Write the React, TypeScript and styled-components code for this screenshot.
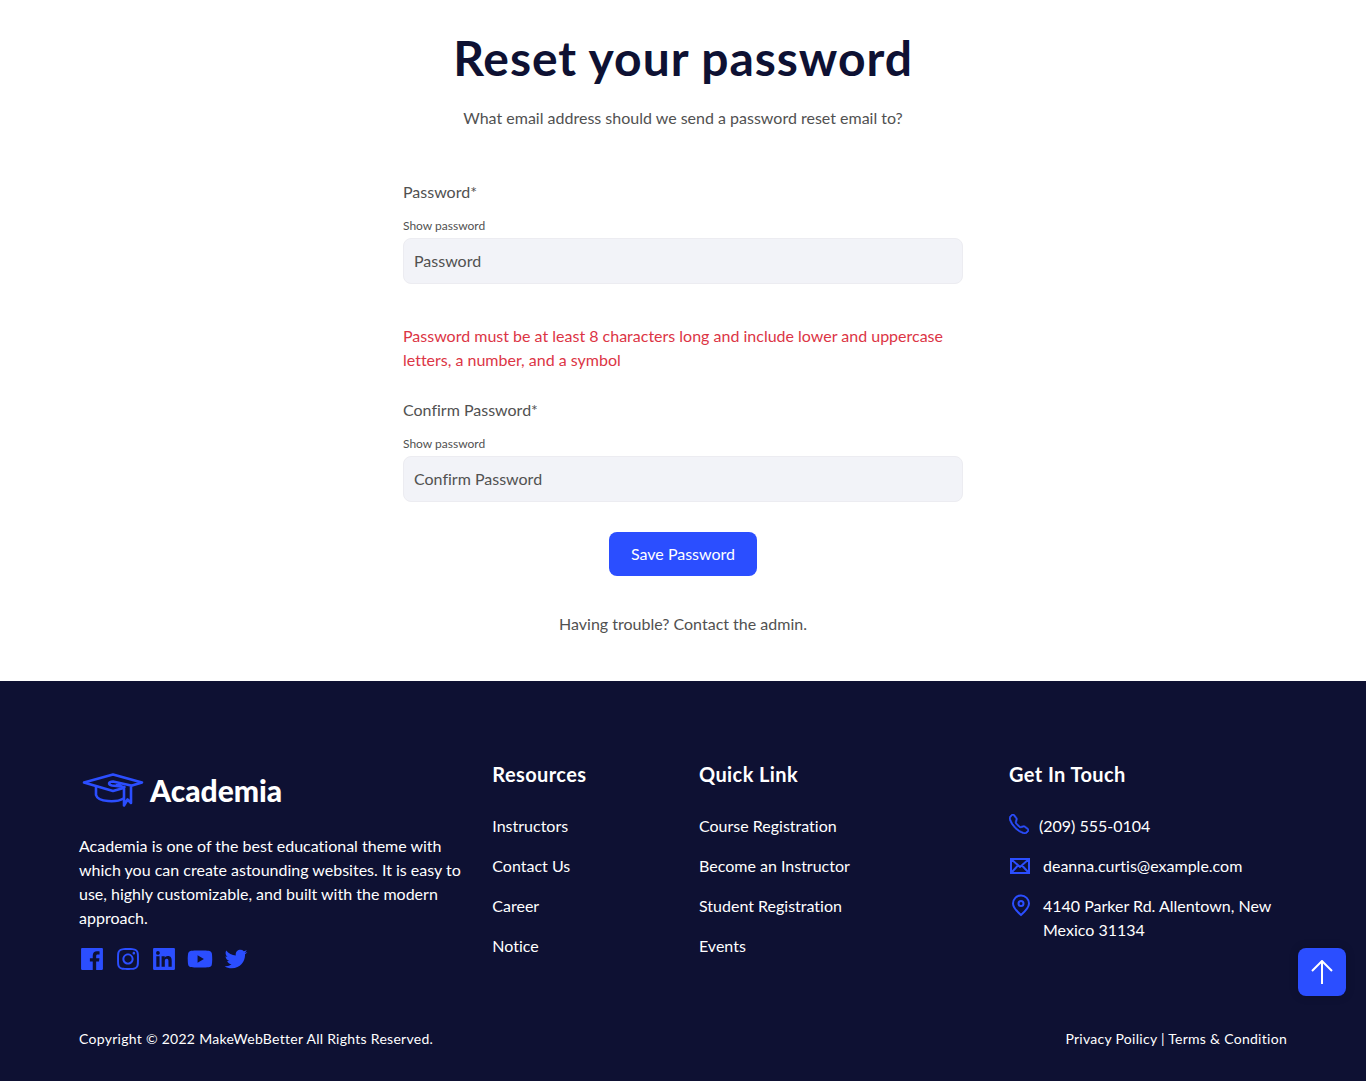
import React, { useState } from "react";
import styled, { createGlobalStyle } from "styled-components";
import {
  AiFillFacebook,
  AiOutlineInstagram,
  AiFillLinkedin,
  AiFillYoutube,
  AiOutlineTwitter,
} from "react-icons/ai";
import { BsTelephone } from "react-icons/bs";

const navy = "#0e1133";
const blue = "#2b4eff";
const grey = "#515151";
const tracking = "0.02em";

const GlobalStyle = createGlobalStyle`
  *, *::before, *::after { box-sizing: border-box; }
  body {
    margin: 0;
    background: #fff;
    color: ${grey};
    font-family: Lato, sans-serif;
    font-size: 16px;
    line-height: 24px;
    font-variant-ligatures: no-common-ligatures;
  }
  h1, h2, p, ul { margin: 0; padding: 0; }
  ul { list-style: none; }
  svg { display: block; flex: none; }
`;

const Main = styled.main`
  display: flex;
  flex-direction: column;
  align-items: center;
  padding: 28px 16px 45px;
  text-align: center;
`;

const Title = styled.h1`
  color: ${navy};
  font-size: 48px;
  line-height: 60px;
  font-weight: 700;
  letter-spacing: ${tracking};
`;

const Intro = styled.p`
  margin-top: 18px;
`;

const Form = styled.form`
  width: 100%;
  max-width: 560px;
  margin: 50px 0 36px;
  text-align: left;
`;

const Field = styled.div`
  display: flex;
  flex-direction: column;
  align-items: flex-start;
`;

const Toggle = styled.button`
  margin: 12px 0 2px;
  padding: 0;
  border: 0;
  background: none;
  color: inherit;
  font: inherit;
  font-size: 12px;
  line-height: 20px;
  cursor: pointer;
`;

const Input = styled.input`
  width: 100%;
  height: 46px;
  padding: 8px 10px 10px;
  border: 1px solid #ececf1;
  border-radius: 8px;
  background: #f2f3f8;
  color: ${grey};
  font: inherit;
  &::placeholder { color: ${grey}; opacity: 1; }
`;

const ErrorText = styled.p`
  margin: 40px 0 26px;
  color: #dc3545;
`;

const Submit = styled.button`
  display: block;
  margin: 30px auto 0;
  padding: 10px 22px;
  border: 0;
  border-radius: 8px;
  background: ${blue};
  color: #fff;
  font: inherit;
  cursor: pointer;
`;

const Footer = styled.footer`
  padding: 81px 0 30px;
  background: ${navy};
  color: #fff;
`;

const Container = styled.div`
  max-width: 1240px;
  margin: 0 auto;
`;

const Columns = styled.div`
  display: grid;
  grid-template-columns: 4fr 2fr 3fr 3fr;
  @media (max-width: 900px) { grid-template-columns: 1fr 1fr; row-gap: 32px; }
`;

const Column = styled.section`
  padding: 0 16px;
`;

const AboutColumn = styled(Column)`
  padding-right: 8px;
`;

const Brand = styled.a`
  display: flex;
  align-items: center;
  gap: 4px;
  height: 40px;
  margin: 8px 0 24px;
  color: #fff;
  font-size: 30px;
  font-weight: 900;
  text-decoration: none;
`;

const Social = styled.div`
  display: flex;
  gap: 8px;
  margin: 15px 0 0 -1px;
  a { color: ${blue}; }
`;

const Heading = styled.h2`
  margin-bottom: 28px;
  font-size: 20px;
  line-height: 24px;
  font-weight: 700;
  letter-spacing: ${tracking};
`;

const List = styled.ul`
  display: grid;
  gap: 16px;
`;

const FooterLink = styled.a`
  color: #fff;
  text-decoration: none;
`;

const Contact = styled.li<{ $gap: number }>`
  display: flex;
  align-items: flex-start;
  gap: ${({ $gap }) => $gap}px;
  svg { color: ${blue}; }
`;

const Legal = styled.div`
  display: flex;
  flex-wrap: wrap;
  justify-content: space-between;
  margin-top: 54px;
  padding: 0 16px;
  font-size: 14px;
  letter-spacing: ${tracking};
`;

const ToTop = styled.a`
  position: fixed;
  right: 20px;
  bottom: 85px;
  display: grid;
  place-items: center;
  width: 48px;
  height: 48px;
  border-radius: 8px;
  background: ${blue};
  color: #fff;
  box-shadow: 0 0 10px rgba(0, 0, 0, 0.2);
`;

const CapIcon = () => (
  <svg width="67" height="40" viewBox="0 0 67 40" fill="none" stroke={blue} strokeWidth="2.6" strokeLinejoin="round" strokeLinecap="round" aria-hidden="true">
    <path d="M34 21 5 12.500 34 4.500 63 12.500 53 15.500M34 21 44.500 18" />
    <path d="M17 16.500V25C19 32.500 38 32.500 44.500 28.500" />
    <path d="M45.500 17 33 15.500C28.500 14.500 29.500 11.500 34 11.500L52 15.500V33L48.500 29.500 45 35.500V17.500L38 14.500" />
  </svg>
);

const MailIcon = () => (
  <svg width="22" height="24" viewBox="0 0 22 24" fill="none" stroke="currentColor" strokeWidth="2" aria-hidden="true">
    <path d="M2 5H20V19H2ZM2 5 11 13 20 5M2 19 9 11.500M20 19 13 11.500" />
  </svg>
);

const PinIcon = () => (
  <svg width="22" height="24" viewBox="0 0 22 24" fill="none" stroke="currentColor" strokeWidth="2" aria-hidden="true">
    <path d="M12 21C8 17.500 4 14 4 9.500A8 8 0 0 1 20 9.500C20 14 16 17.500 12 21Z" />
    <circle cx="12" cy="9.500" r="2.500" />
  </svg>
);

const ArrowIcon = () => (
  <svg width="24" height="24" viewBox="0 0 24 24" fill="none" stroke="currentColor" strokeWidth="2" aria-hidden="true">
    <path d="M12 24V1M2 11 12 1 22 11" />
  </svg>
);

function PasswordField({ id, label }: { id: string; label: string }) {
  const [visible, setVisible] = useState(false);
  return (
    <Field>
      <label htmlFor={id}>{label}*</label>
      <Toggle type="button" onClick={() => setVisible(!visible)}>Show password</Toggle>
      <Input id={id} type={visible ? "text" : "password"} placeholder={label} />
    </Field>
  );
}

function LinkColumn({ title, links }: { title: string; links: string[] }) {
  return (
    <Column>
      <Heading>{title}</Heading>
      <List>
        {links.map((link) => (
          <li key={link}><FooterLink href="#">{link}</FooterLink></li>
        ))}
      </List>
    </Column>
  );
}

const socials = [
  { name: "Facebook", Icon: AiFillFacebook },
  { name: "Instagram", Icon: AiOutlineInstagram },
  { name: "LinkedIn", Icon: AiFillLinkedin },
  { name: "YouTube", Icon: AiFillYoutube },
  { name: "Twitter", Icon: AiOutlineTwitter },
];

export default function App() {
  return (
    <>
      <GlobalStyle />
      <Main>
        <Title>Reset your password</Title>
        <Intro>What email address should we send a password reset email to?</Intro>
        <Form onSubmit={(e) => e.preventDefault()}>
          <PasswordField id="password" label="Password" />
          <ErrorText>
            Password must be at least 8 characters long and include lower and uppercase letters, a number, and a symbol
          </ErrorText>
          <PasswordField id="confirm-password" label="Confirm Password" />
          <Submit type="submit">Save Password</Submit>
        </Form>
        <p>Having trouble? Contact the admin.</p>
      </Main>
      <Footer>
        <Container>
          <Columns>
            <AboutColumn>
              <Brand href="#"><CapIcon />Academia</Brand>
              <p>
                Academia is one of the best educational theme with which you can create astounding websites. It is easy
                to use, highly customizable, and built with the modern approach.
              </p>
              <Social>
                {socials.map(({ name, Icon }) => (
                  <a key={name} href="#" aria-label={name}><Icon size={28} /></a>
                ))}
              </Social>
            </AboutColumn>
            <LinkColumn title="Resources" links={["Instructors", "Contact Us", "Career", "Notice"]} />
            <LinkColumn
              title="Quick Link"
              links={["Course Registration", "Become an Instructor", "Student Registration", "Events"]}
            />
            <Column>
              <Heading>Get In Touch</Heading>
              <List>
                <Contact $gap={10}>
                  <BsTelephone size={20} stroke="currentColor" strokeWidth={0.5} />
                  <FooterLink href="tel:2095550104">(209) 555-0104</FooterLink>
                </Contact>
                <Contact $gap={12}>
                  <MailIcon />
                  <FooterLink href="mailto:deanna.curtis@example.com">deanna.curtis@example.com</FooterLink>
                </Contact>
                <Contact $gap={12}>
                  <PinIcon />
                  <span>4140 Parker Rd. Allentown, New Mexico 31134</span>
                </Contact>
              </List>
            </Column>
          </Columns>
          <Legal>
            <p>Copyright © 2022 MakeWebBetter All Rights Reserved.</p>
            <p>
              <FooterLink href="#">Privacy Poilicy</FooterLink> | <FooterLink href="#">Terms &amp; Condition</FooterLink>
            </p>
          </Legal>
        </Container>
      </Footer>
      <ToTop href="#" aria-label="Back to top"><ArrowIcon /></ToTop>
    </>
  );
}
